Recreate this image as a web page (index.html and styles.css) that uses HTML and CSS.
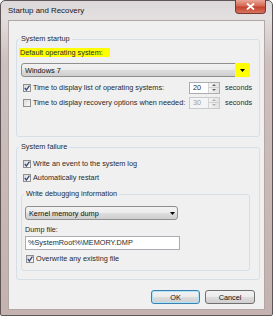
FILE: index.html
```html
<!DOCTYPE html>
<html>
<head>
<meta charset="utf-8">
<link rel="stylesheet" href="styles.css">
</head>
<body>
<div class="window">
  <div class="titlebar">
    <span class="title">Startup and Recovery</span>
    <div class="close"><svg width="9" height="7" viewBox="0 0 9 7"><path d="M1 0.5 L8 6.5 M8 0.5 L1 6.5" stroke="#fff" stroke-width="1.8" fill="none"/></svg></div>
  </div>
  <div class="client">
    <fieldset class="group g1">
      <legend>System startup</legend>
      <div class="hl">Default operating system:</div>
      <div class="combo wide"><span>Windows 7</span><span class="drop yellow"><svg width="5" height="3" viewBox="0 0 5 3"><polygon points="0,0 5,0 2.5,3" fill="#000"/></svg></span></div>
      <div class="row r1">
        <span class="cb"><svg width="6" height="6" viewBox="0 0 6 6"><polyline points="0.8,3 2.4,5 5.4,0.6" fill="none" stroke="#34457a" stroke-width="1.3"/></svg></span>
        <span class="lbl">Time to display list of operating systems:</span>
        <span class="spin"><span class="val">20</span><span class="btns"><span class="up"></span><span class="dn"></span></span></span>
        <span class="sec">seconds</span>
      </div>
      <div class="row r2">
        <span class="cb"></span>
        <span class="lbl">Time to display recovery options when needed:</span>
        <span class="spin disabled"><span class="val">30</span><span class="btns"><span class="up"></span><span class="dn"></span></span></span>
        <span class="sec">seconds</span>
      </div>
    </fieldset>
    <fieldset class="group g2">
      <legend>System failure</legend>
      <div class="row r3">
        <span class="cb"><svg width="6" height="6" viewBox="0 0 6 6"><polyline points="0.8,3 2.4,5 5.4,0.6" fill="none" stroke="#34457a" stroke-width="1.3"/></svg></span>
        <span>Write an event to the system log</span>
      </div>
      <div class="row r4">
        <span class="cb"><svg width="6" height="6" viewBox="0 0 6 6"><polyline points="0.8,3 2.4,5 5.4,0.6" fill="none" stroke="#34457a" stroke-width="1.3"/></svg></span>
        <span>Automatically restart</span>
      </div>
      <fieldset class="group inner">
        <legend>Write debugging information</legend>
        <div class="combo kd"><span>Kernel memory dump</span><span class="drop plain"><svg width="5" height="3" viewBox="0 0 5 3"><polygon points="0,0 5,0 2.5,3" fill="#000"/></svg></span></div>
        <div class="dl">Dump file:</div>
        <div class="tb">%SystemRoot%\MEMORY.DMP</div>
        <div class="row r5">
          <span class="cb"><svg width="6" height="6" viewBox="0 0 6 6"><polyline points="0.8,3 2.4,5 5.4,0.6" fill="none" stroke="#34457a" stroke-width="1.3"/></svg></span>
          <span>Overwrite any existing file</span>
        </div>
      </fieldset>
    </fieldset>
    <div class="buttons">
      <button class="btn ok">OK</button>
      <button class="btn cancel">Cancel</button>
    </div>
  </div>
</div>
</body>
</html>
```
FILE: styles.css
```css
* { box-sizing: border-box; }
body {
  margin: 0;
  background: #ffffff;
  font-family: "Liberation Sans", Arial, sans-serif;
  font-size: 7.3px;
  color: #2a2a2a;
}
.window {
  width: 273px;
  height: 316px;
  border: 1px solid #5f5555;
  border-radius: 5px 5px 2px 2px;
  background: linear-gradient(#dcd7d9 0px, #e3dfe0 16px, #cdc0be 60px, #c3b2af 100%);
  padding: 0 7px 5px;
  display: flex;
  flex-direction: column;
}
.titlebar {
  height: 19px;
  display: flex;
  align-items: center;
  position: relative;
}
.title {
  font-size: 7.9px;
  color: #1a1a1a;
}
.close {
  position: absolute;
  top: -1px;
  right: -1px;
  width: 31px;
  height: 14px;
  border: 1px solid #7a3a30;
  border-top: none;
  border-radius: 0 0 4px 4px;
  background: linear-gradient(#e9a698, #d66a55 45%, #c3432e 55%, #d7745f);
  display: flex;
  align-items: center;
  justify-content: center;
}
.client {
  flex: 1;
  background: #f0f0f0;
  border: 1px solid #b3a7a6;
  padding: 13px 0 0 7px;
}
fieldset.group {
  margin: 0;
  padding: 0;
  border: 1px solid #d5dfe5;
  border-radius: 3px;
  min-width: 0;
}
legend {
  padding: 0 2px;
  margin-left: 2px;
  height: 10px;
  line-height: 10px;
}
fieldset.g1 { width: 244px; height: 103px; }
fieldset.g2 { width: 244px; height: 138px; margin-top: 5px; }
fieldset.inner { width: 229px; height: 82px; margin: 5px 0 0 4px; }
.hl {
  margin: 4px 0 0 2px;
  width: 91px;
  height: 9px;
  line-height: 9px;
  padding-left: 1px;
  background: #ffff00;
}
.combo {
  display: flex;
  align-items: center;
  height: 14px;
  border: 1px solid #8e8f8f;
  border-radius: 3px;
  background: linear-gradient(#f2f2f2, #ebebeb 50%, #dddddd 50%, #cfcfcf);
  padding-left: 3px;
  color: #111;
}
.combo.wide { margin: 6px 0 0 4px; width: 229px; }
.combo.kd { margin: 7px 0 0 3px; width: 153px; }
.drop {
  margin: -1px -1px -1px auto;
  align-self: stretch;
  display: flex;
  align-items: center;
  justify-content: center;
}
.drop.yellow {
  width: 15px;
  background: #ffff00;
  border-radius: 0 3px 3px 0;
}
.drop.plain { width: 12px; }
.row {
  display: flex;
  align-items: center;
  height: 13px;
}
.r1 { margin-top: 4px; }
.r2 { margin-top: 2px; }
.r3 { margin-top: 5px; }
.r4 { margin-top: 1px; }
.r5 { margin-top: 2px; }
.cb {
  flex: none;
  width: 8px;
  height: 8px;
  margin: 0 2px 0 6px;
  border: 1px solid #8f8f8f;
  background: linear-gradient(135deg, #d9d9d9, #fbfbfb);
  display: flex;
  align-items: center;
  justify-content: center;
}
.r5 .cb { margin-left: 4px; }
.lbl { width: 156px; flex: none; }
.spin {
  flex: none;
  display: flex;
  width: 31px;
  height: 12px;
  border: 1px solid #abadb3;
  background: #fff;
}
.spin .val {
  flex: 1;
  padding-left: 3px;
  line-height: 10px;
}
.spin .btns {
  width: 11px;
  display: flex;
  flex-direction: column;
  border-left: 1px solid #d4d4d4;
  background: linear-gradient(90deg, #f4f4f4, #e2e2e2);
}
.spin .btns span {
  flex: 1;
  position: relative;
}
.spin .up { border-bottom: 1px solid #d0d0d0; }
.spin .up::after, .spin .dn::after {
  content: "";
  position: absolute;
  left: 3px;
  width: 0;
  height: 0;
  border-left: 2px solid transparent;
  border-right: 2px solid transparent;
}
.spin .up::after { top: 1px; border-bottom: 2px solid #666; }
.spin .dn::after { top: 1px; border-top: 2px solid #666; }
.spin.disabled { background: #f4f4f4; border-color: #c9cacc; color: #a0a0a0; }
.spin.disabled .up::after { border-bottom-color: #b0b0b0; }
.spin.disabled .dn::after { border-top-color: #b0b0b0; }
.sec { margin-left: 5px; }
.dl {
  margin: 5px 0 0 3px;
  height: 10px;
  line-height: 10px;
}
.tb {
  margin: 1px 0 0 3px;
  width: 155px;
  height: 14px;
  border: 1px solid #abadb3;
  background: #fff;
  padding-left: 2px;
  line-height: 12px;
}
.buttons {
  display: flex;
  justify-content: flex-end;
  gap: 5px;
  margin-top: 10px;
  padding-right: 9px;
}
.btn {
  height: 14px;
  padding: 0;
  border: 1px solid #707070;
  border-radius: 3px;
  background: linear-gradient(#f2f2f2, #ebebeb 50%, #dddddd 50%, #cfcfcf);
  font-family: "Liberation Sans", Arial, sans-serif;
  font-size: 7.3px;
  color: #111;
}
.btn.ok {
  width: 49px;
  border-color: #3c7fb1;
  box-shadow: inset 0 0 0 1px #aee3f8;
}
.btn.cancel { width: 50px; }
```
